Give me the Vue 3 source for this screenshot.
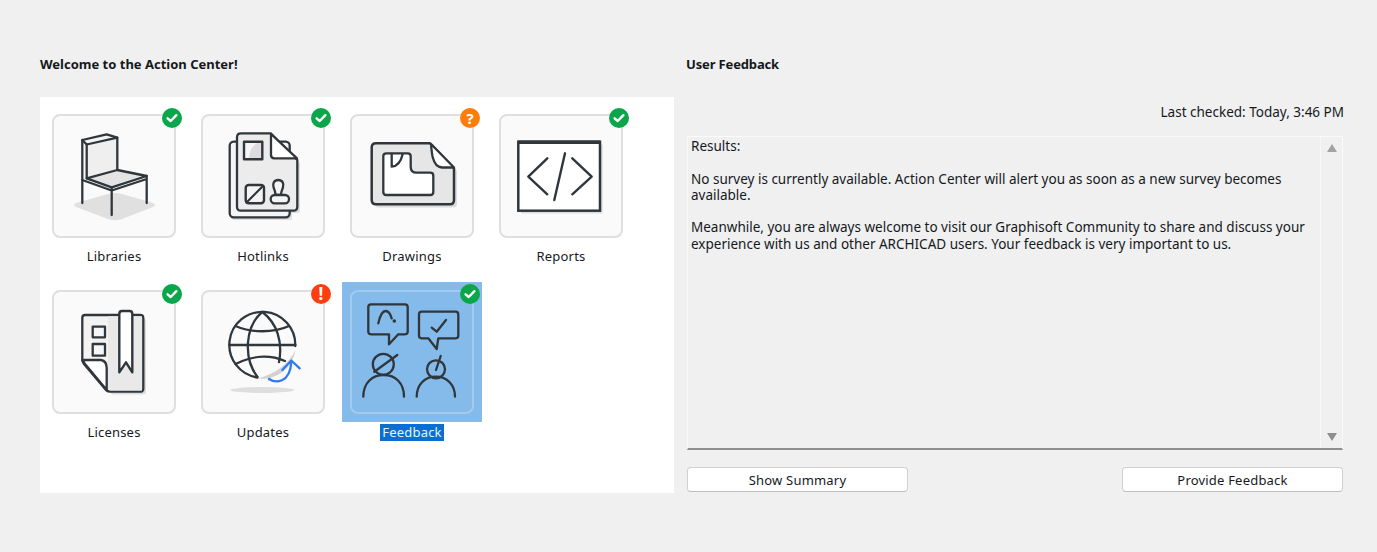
<script setup>
const tiles = [
  { name: 'Libraries', status: 'ok' },
  { name: 'Hotlinks', status: 'ok' },
  { name: 'Drawings', status: 'ask' },
  { name: 'Reports', status: 'ok' },
  { name: 'Licenses', status: 'ok' },
  { name: 'Updates', status: 'err' },
  { name: 'Feedback', status: 'ok', selected: true }
]
</script>

<template>
  <main class="page">
    <section class="left">
      <h2 class="title">Welcome to the Action Center!</h2>
      <div class="panel">
        <div v-for="t in tiles" :key="t.name" class="cell" :class="{ selected: t.selected }">
          <div class="frame">
            <div class="tile">
              <svg class="art" viewBox="0 0 124 124" fill="none" stroke="#30373c" stroke-width="2.3" stroke-linecap="round" stroke-linejoin="round">
                <g v-if="t.name === 'Libraries'">
                  <path d="M24 89 L56 80 Q63 78 70 80 L101 89 Q105 91 101 93 L70 105 Q63 107.5 56 105 L24 93 Q20 91 24 89Z" fill="#e0e0e0" stroke="none"/>
                  <path d="M34.7 31 L65.3 24 V56 L34.7 64.3Z" fill="#efefef" stroke="none"/>
                  <path d="M30.3 26 L54.7 20.3 L65.3 23.7 L34.7 30.5 L30.3 26Z" fill="#f4f4f4"/>
                  <path d="M30.3 26 V89 M34.7 30.5 V64.3 M65.3 23.7 V56"/>
                  <path d="M34.7 64.3 L65.3 56 L94.7 62 L59.7 73.3Z" fill="#e4e4e4"/>
                  <path d="M30.3 66 L59.7 76.5 L94.7 65 M59.7 73.3 V101 M94.7 62 V89"/>
                </g>
                <g v-else-if="t.name === 'Hotlinks'">
                  <path d="M40 22 H70 L99 49 V97 Q99 99 97 99 H91 V104 Q91 106 89 106 H33 Q31 106 31 104 V50Z" fill="#dedede" stroke="none"/>
                  <rect x="28.7" y="27.7" width="60" height="75.6" rx="4" fill="#f4f4f4"/>
                  <path d="M40 19.3 H69.7 L96.3 46 V92.7 Q96.3 96.7 92.3 96.7 H40 Q36 96.7 36 92.7 V23.3 Q36 19.3 40 19.3Z" fill="#ececec"/>
                  <path d="M70 20 V41 Q70 44.3 73.3 44.3 H96 Z" fill="#fff"/>
                  <rect x="43" y="27.7" width="18.3" height="17.6" fill="#f6f6f6" stroke-width="2.4"/>
                  <path d="M48 44 Q49 33 56 29 H60 V44Z" fill="#ddd" stroke="none"/>
                  <rect x="44.7" y="71" width="18.3" height="18.3" rx="3" fill="#f4f4f4" stroke-width="2.4"/>
                  <path d="M45.5 88.5 L62.2 71.8" stroke-width="2.2"/>
                  <path d="M77.3 66 C73 66 71.5 69.5 72.5 73 C73.2 76 74.5 77 74.5 81 H80 C80 77 81.4 76 82 73 C83 69.5 81.5 66 77.3 66Z" fill="#f4f4f4"/>
                  <rect x="69.7" y="81" width="18.3" height="8.3" rx="4" fill="#f4f4f4"/>
                </g>
                <g v-else-if="t.name === 'Drawings'">
                  <path d="M29 33 H84 L107 57 V90 Q107 93.5 103 93.5 H29 Q25 93.5 25 90 V37Z" fill="#dcdcdc" stroke="none"/>
                  <path d="M26 29.3 H80 L104 54.3 V86 Q104 90.3 100 90.3 H26 Q21.7 90.3 21.7 86 V33.6 Q21.7 29.3 26 29.3Z" fill="#e6e6e6" stroke-width="2.5"/>
                  <path d="M81 30 Q82 42 83 44 Q85 52.7 92 53.5 H104Z" fill="#fff"/>
                  <path d="M36.3 39.3 H57.7 Q60.7 39.3 60.7 42.3 V52.7 Q60.7 58.7 66.7 58.7 H80.3 Q83.3 58.7 83.3 61.7 V78 Q83.3 81 80.3 81 H36.3 Q33.3 81 33.3 78 V42.3 Q33.3 39.3 36.3 39.3Z" fill="#fff"/>
                  <path d="M41.7 40 V52.7 Q50 52 52.7 40"/>
                </g>
                <g v-else-if="t.name === 'Reports'">
                  <rect x="22" y="30.5" width="81.7" height="69" fill="#dedede" stroke="none"/>
                  <rect x="19.3" y="27.7" width="81.7" height="69" fill="#fff" stroke-linejoin="miter" stroke-width="2.5"/>
                  <path d="M19.3 28.3 H101" stroke-width="3.4" stroke-linecap="butt"/>
                  <path d="M48.3 44.3 L29.3 62.7 L48.3 80.3 M66 39.3 L55.3 86 M73.3 44.3 L92.7 62.7 L73.3 80.3" stroke-width="2.4"/>
                </g>
                <g v-else-if="t.name === 'Licenses'">
                  <path d="M36 28 H90 Q94 28 94 31 V102 Q94 104.5 90 104.5 H60 L34 74Z" fill="#dcdcdc" stroke="none"/>
                  <path d="M33 25 H88 Q91.3 25 91.3 28 V98.7 Q91.3 101.7 88 101.7 H58 Q56 101.7 54 100 L32 74 Q30.3 72 30.3 70 V28 Q30.3 25 33 25Z" fill="#f3f3f3"/>
                  <path d="M55.5 78 H90 V100.5 H58 L55.5 99Z" fill="#e9e9e9" stroke="none"/>
                  <path d="M56 26.2 H90 V80 H56Z" fill="#e9e9e9" stroke="none"/>
                  <path d="M30.3 70 Q31 70 34 70 H49 Q54.7 71 54.7 78 V100 L33 74 Z" fill="#fff"/>
                  <rect x="40.7" y="36.7" width="12.3" height="10.6" fill="#f6f6f6"/>
                  <rect x="40.7" y="54" width="12.3" height="11.7" fill="#f6f6f6"/>
                  <path d="M67.3 82.3 V24 Q67.3 21 70 21 H77.6 Q80.3 21 80.3 24 V82.3 L74 72.3Z" fill="#fff" stroke-width="2.4"/>
                </g>
                <g v-else-if="t.name === 'Updates'">
                  <ellipse cx="61.3" cy="100" rx="32" ry="3" fill="#dedede" stroke="none"/>
                  <path d="M57 88.5 A33.5 33.5 0 0 0 94.5 60 C88 74 74 84 57 88.5Z" fill="#d2d2d2" stroke="none"/>
                  <path d="M56.3 87.5 A33 33 0 1 1 94.3 56"/>
                  <path d="M61.3 22 C44 36 42 68 56.5 87 M61.3 22 C76 33 82 52 78 72"/>
                  <path d="M28.3 55 H94.3 M34.5 36 C50 43 73 43 88 36 M34.5 74 C50 66 68 64 84 71"/>
                  <path d="M68 89 C74 93 89 94 90.3 72" stroke="#2f7bf0" stroke-width="2.3"/>
                  <path d="M81.3 80 L90.3 70.5 L98.7 78.3" stroke="#2f7bf0" stroke-width="2.3"/>
                </g>
                <g v-else>
                  <path d="M21 14.3 H55 Q57.7 14.3 57.7 17 V41.6 Q57.7 44.3 55 44.3 H48.3 L39 54.3 V44.3 H21 Q18.3 44.3 18.3 41.6 V17 Q18.3 14.3 21 14.3Z"/>
                  <path d="M28.3 33.3 Q31 21 35.7 21 Q39.5 21 41.7 28.3"/>
                  <circle cx="44.3" cy="31" r="1.8" fill="#30373c" stroke="none"/>
                  <path d="M71.7 21.7 H105.6 Q108.3 21.7 108.3 24.4 V45.6 Q108.3 48.3 105.6 48.3 H88.3 L86.7 59 L78.3 48.3 H71.7 Q69 48.3 69 45.6 V24.4 Q69 21.7 71.7 21.7Z"/>
                  <path d="M81.7 37.7 L86.7 41.7 L96 30"/>
                  <circle cx="33.3" cy="74.3" r="10.5"/>
                  <path d="M24.3 81.7 L47.3 65"/>
                  <path d="M13.3 106.7 C13.3 93 22 85 33.7 85 C45.5 85 54 93 54 106.7"/>
                  <circle cx="86" cy="79.3" r="9"/>
                  <path d="M86 80 L90.7 66"/>
                  <path d="M66.7 106.7 C66.7 95 74.5 86.7 85.8 86.7 C97 86.7 105 95 105 106.7"/>
                </g>
              </svg>
              <span class="badge" :class="t.status">
                <svg v-if="t.status === 'ok'" viewBox="0 0 20 20" width="20" height="20" fill="none"><path d="M5.6 10.3 L8.7 13 L14.4 7.2" stroke="#fff" stroke-width="2.4" stroke-linecap="round" stroke-linejoin="round"/></svg>
                <template v-else-if="t.status === 'ask'">?</template>
                <template v-else>!</template>
              </span>
            </div>
          </div>
          <span class="label">{{ t.name }}</span>
        </div>
      </div>
    </section>

    <section class="right">
      <h2 class="title">User Feedback</h2>
      <p class="checked">Last checked: Today, 3:46 PM</p>
      <div class="results">
        <div class="text">
          <p>Results:</p>
          <p>No survey is currently available. Action Center will alert you as soon as a new survey becomes available.</p>
          <p>Meanwhile, you are always welcome to visit our Graphisoft Community to share and discuss your experience with us and other ARCHICAD users. Your feedback is very important to us.</p>
        </div>
        <div class="scrollbar">
          <span class="arrow up"></span>
          <span class="arrow down"></span>
        </div>
      </div>
      <div class="actions">
        <button class="btn" type="button">Show Summary</button>
        <button class="btn" type="button">Provide Feedback</button>
      </div>
    </section>
  </main>
</template>

<style>
html, body { margin: 0; background: #f0f0f0; }
</style>

<style scoped>
.page {
  width: 1377px;
  height: 552px;
  box-sizing: border-box;
  padding: 56px 33px 0 40px;
  display: flex;
  gap: 12px;
  background: #f0f0f0;
  color: #15191d;
  font-family: "Noto Sans", "Open Sans", sans-serif;
  font-size: 13.5px;
}
.left { width: 634px; flex: none; }
.right { flex: 1; min-width: 0; }
.title {
  margin: 0;
  font-size: 13px;
  line-height: 16px;
  font-weight: 700;
  color: #15181b;
}
.right .title { letter-spacing: -0.15px; }
.panel {
  margin-top: 25px;
  height: 396px;
  box-sizing: border-box;
  padding: 9px 0 0 4px;
  background: #fff;
  display: grid;
  grid-template-columns: repeat(4, 149px);
  grid-auto-rows: 176px;
}
.cell {
  display: flex;
  flex-direction: column;
  align-items: center;
  width: 140px;
}
.frame {
  width: 140px;
  height: 140px;
  display: flex;
  align-items: center;
  justify-content: center;
}
.cell.selected .frame { background: #84bbea; }
.tile {
  position: relative;
  width: 124px;
  height: 124px;
  box-sizing: border-box;
  border: 2px solid #dfdfdf;
  border-radius: 8px;
  background: #fafafa;
}
.cell.selected .tile {
  background: transparent;
  border-color: #a3cbec;
}
.art {
  position: absolute;
  left: -2px;
  top: -2px;
  width: 124px;
  height: 124px;
  filter: blur(0.35px);
}
.badge {
  position: absolute;
  top: -8px;
  right: -8px;
  width: 20px;
  height: 20px;
  border-radius: 50%;
  display: flex;
  align-items: center;
  justify-content: center;
  color: #fff;
  font-size: 15px;
  font-weight: 700;
  line-height: 20px;
}
.badge.ok { background: #0ba64a; }
.badge.ask { background: #fb7d0a; }
.badge.err { background: #fb3f0e; font-size: 17px; }
.label {
  margin-top: 2px;
  padding: 0 2px;
  line-height: 17px;
  font-size: 13px;
  letter-spacing: 0.2px;
}
.cell.selected .label {
  background: #0a6fd0;
  color: #e8f3ff;
}
.checked {
  margin: 32px 0 0;
  line-height: 16px;
  text-align: right;
}
.results {
  margin-top: 16px;
  width: 656px;
  height: 314px;
  box-sizing: border-box;
  margin-left: 1px;
  display: flex;
  background: #f0f0f0;
  border-top: 1px solid #fafafa;
  border-right: 1px solid #fafafa;
  border-left: 1px solid #fafafa;
  border-bottom: 2px solid #8e8e8e;
}
.text {
  flex: 1;
  padding: 1px 10px 0 3px;
  line-height: 16.25px;
}
.text p { margin: 0 0 16.25px; }
.scrollbar {
  width: 22px;
  flex: none;
  border-left: 1px solid #f8f8f8;
  position: relative;
  display: flex;
  flex-direction: column;
  justify-content: space-between;
  align-items: center;
  padding: 7px 0 7px;
  box-sizing: border-box;
}
.arrow {
  width: 0;
  height: 0;
  border-left: 5.5px solid transparent;
  border-right: 5.5px solid transparent;
}
.arrow.up { border-bottom: 8px solid #a2a2a2; }
.arrow.down { border-top: 8px solid #8e8e8e; }
.actions {
  margin-top: 17px;
  margin-left: 1px;
  width: 656px;
  display: flex;
  justify-content: space-between;
}
.btn {
  width: 221px;
  height: 25px;
  box-sizing: border-box;
  padding: 0;
  border: 1px solid #d0d0d0;
  border-bottom-color: #bdbdbd;
  border-radius: 4px;
  background: #fff;
  color: #15191d;
  font-family: inherit;
  font-size: 13px;
  letter-spacing: 0.2px;
  line-height: 22px;
}
</style>
